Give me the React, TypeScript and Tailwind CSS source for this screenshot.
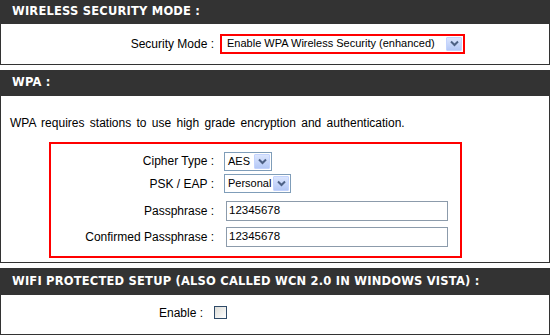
import React from "react";

const headFont = "font-['DejaVu_Sans',sans-serif]";
const bodyFont = "font-['Liberation_Sans',Arial,sans-serif]";

function Arrow() {
  return (
    <div className="h-full w-[16px] shrink-0 border border-[#c3d3fd] bg-gradient-to-b from-[#dbe5fd] to-[#b4c8f6] flex items-center justify-center rounded-[1px]">
      <svg width="9" height="7" viewBox="0 0 9 7">
        <path d="M1 1.5 L4.5 5 L8 1.5" fill="none" stroke="#4d6185" strokeWidth="2" />
      </svg>
    </div>
  );
}

function Select({ value, width }: { value: string; width: string }) {
  return (
    <div className={`${width} h-[19px] border border-[#7f9db9] bg-white flex items-center p-[1px]`}>
      <span className="flex-1 pl-[2px] leading-none text-[11px] whitespace-nowrap overflow-hidden">{value}</span>
      <Arrow />
    </div>
  );
}

function Header({ title, h }: { title: string; h: string }) {
  return (
    <div className={`${h} bg-[#333333] flex items-center pl-[12px] text-white font-bold text-[11.5px] tracking-[0.2px] whitespace-nowrap ${headFont}`}>
      {title}
    </div>
  );
}

export default function App() {
  return (
    <div className={`w-[551px] h-[335px] bg-white text-black text-[12px] overflow-hidden ${bodyFont}`}>
      <div className="w-[550px]">
        <Header title="WIRELESS SECURITY MODE :" h="h-[24px]" />
        <div className="h-[41px] border-x border-b border-[#333333] flex items-center pb-[1px]">
          <span className="w-[213px] text-right">Security Mode :</span>
          <div className="ml-[6px] w-[245px] h-[20px] border-2 border-[#ff0000] bg-white flex items-center p-[1px]">
            <span className="flex-1 pl-[4px] whitespace-nowrap overflow-hidden text-[11px]">Enable WPA Wireless Security (enhanced)</span>
            <Arrow />
          </div>
        </div>

        <div className="mt-[5px]">
          <Header title="WPA :" h="h-[26px]" />
          <div className="h-[167px] border-x border-b border-[#333333] pt-[20px]">
            <p className="pl-[9px] leading-[14px] [word-spacing:2px]">
              WPA requires stations to use high grade encryption and authentication.
            </p>
            <div className="mt-[12px] ml-[48px] w-[413px] h-[116px] border-2 border-[#ff0000] pt-[8px]">
              <div className="flex items-center h-[18px]">
                <span className="w-[163px] text-right">Cipher Type :</span>
                <div className="ml-[10px]">
                  <Select value="AES" width="w-[48px]" />
                </div>
              </div>
              <div className="flex items-center h-[19px] mt-[4px]">
                <span className="w-[163px] text-right">PSK / EAP :</span>
                <div className="ml-[10px]">
                  <Select value="Personal" width="w-[67px]" />
                </div>
              </div>
              <div className="flex items-center h-[20px] mt-[8px]">
                <span className="w-[163px] text-right">Passphrase :</span>
                <div className="ml-[12px] w-[222px] h-[20px] border border-[#8c9bab] flex items-center pl-[2px] text-[11.5px]">
                  12345678
                </div>
              </div>
              <div className="flex items-center h-[20px] mt-[6px]">
                <span className="w-[163px] text-right">Confirmed Passphrase :</span>
                <div className="ml-[12px] w-[222px] h-[20px] border border-[#8c9bab] flex items-center pl-[2px] text-[11.5px]">
                  12345678
                </div>
              </div>
            </div>
          </div>
        </div>

        <div className="mt-[5px]">
          <Header title="WIFI PROTECTED SETUP (ALSO CALLED WCN 2.0 IN WINDOWS VISTA) :" h="h-[27px]" />
          <div className="h-[40px] border-x border-b border-[#333333] flex items-center pb-[4px]">
            <span className="w-[202px] text-right">Enable :</span>
            <div className="ml-[11px] w-[13px] h-[13px] border border-[#2f4a68] bg-gradient-to-br from-[#dcdcd7] to-[#ffffff]" />
          </div>
        </div>
      </div>
    </div>
  );
}
